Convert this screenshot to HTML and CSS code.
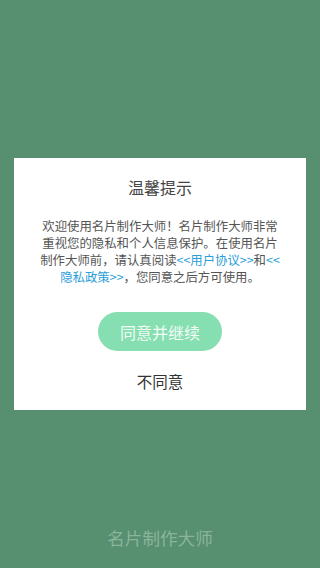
FILE: index.html
```html
<!DOCTYPE html>
<html lang="zh-CN">
<head>
    <meta charset="UTF-8">
    <meta name="viewport" content="width=device-width, initial-scale=1.0">
    <title>名片制作大师</title>
    <link rel="stylesheet" href="styles.css">
</head>
<body>

    <div class="screen">
        <!-- 隐私弹窗 -->
        <div class="dialog">
            <h2 class="dialog-title">温馨提示</h2>
            <p class="dialog-text">
                欢迎使用名片制作大师！名片制作大师非常重视您的隐私和个人信息保护。在使用名片制作大师前，请认真阅读<a href="#" class="link">&lt;&lt;用户协议&gt;&gt;</a>和<a href="#" class="link">&lt;&lt;隐私政策&gt;&gt;</a>，您同意之后方可使用。
            </p>
            <button class="btn-agree">同意并继续</button>
            <button class="btn-refuse">不同意</button>
        </div>

        <!-- 底部名称 -->
        <div class="app-name">名片制作大师</div>
    </div>

</body>
</html>
```

FILE: styles.css
```css
/* 基础 */
body {
    margin: 0;
    padding: 0;
    font-family: "Noto Sans CJK SC", "Noto Sans", sans-serif;
    background-color: #578f71;
}

.screen {
    height: 568px;
    display: flex;
    flex-direction: column;
    align-items: center;
    padding-top: 158px;
    box-sizing: border-box;
}

/* 弹窗 */
.dialog {
    width: 292px;
    height: 252px;
    box-sizing: border-box;
    background-color: #fff;
    padding: 18px 26px 0;
    display: flex;
    flex-direction: column;
    align-items: center;
}

.dialog-title {
    margin: 0;
    font-size: 16px;
    line-height: 22px;
    font-weight: normal;
    color: #444;
}

.dialog-text {
    margin: 20px 0 0;
    font-size: 12.4px;
    line-height: 17px;
    color: #555;
    text-align: center;
}

.link {
    color: #2b9ed8;
    text-decoration: none;
}

.btn-agree {
    margin-top: 26px;
    width: 124px;
    height: 39px;
    border: none;
    border-radius: 20px;
    background-color: #86dfb1;
    color: #f2fbf6;
    font-family: inherit;
    font-size: 16px;
    line-height: 22px;
    cursor: pointer;
}

.btn-refuse {
    margin-top: 19px;
    border: none;
    background: none;
    padding: 0;
    color: #333;
    font-family: inherit;
    font-size: 15.5px;
    line-height: 22px;
    cursor: pointer;
}

/* 底部 */
.app-name {
    margin-top: auto;
    margin-bottom: 18px;
    font-size: 17.6px;
    line-height: 24px;
    color: #8ab59c;
}
```
